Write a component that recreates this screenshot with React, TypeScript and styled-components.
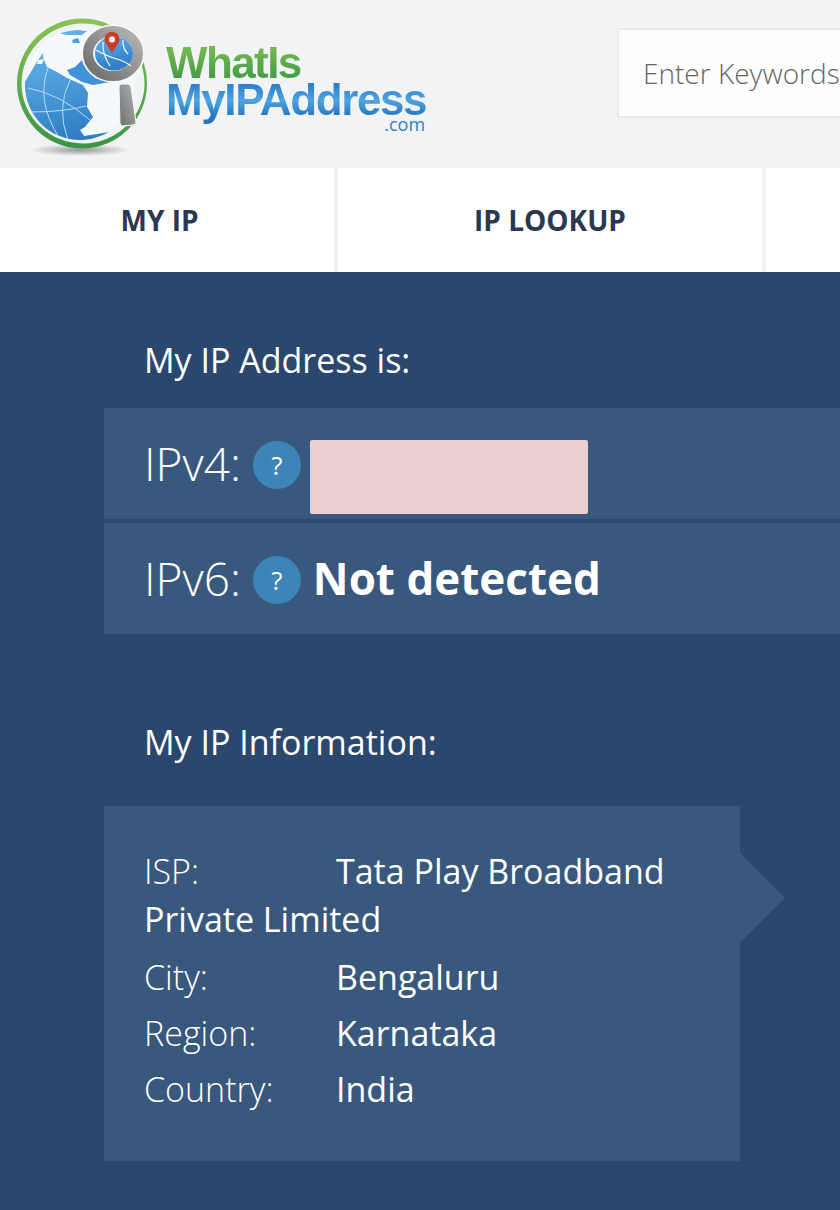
import React from "react";
import styled, { createGlobalStyle } from "styled-components";

const GlobalStyle = createGlobalStyle`
  html, body {
    margin: 0;
    padding: 0;
    width: 840px;
    height: 1210px;
    overflow: hidden;
    background: #2c476e;
    font-family: "Open Sans", "Liberation Sans", sans-serif;
  }
  * { box-sizing: border-box; }
`;

const Page = styled.div`
  width: 840px;
  height: 1210px;
  overflow: hidden;
`;

const Header = styled.header`
  height: 168px;
  background: #f2f3f5;
  display: flex;
  align-items: flex-start;
  overflow: hidden;
`;

const Logo = styled.a`
  display: flex;
  flex: 0 0 617px;
  padding: 10px 0 0 10px;
`;

const Wordmark = styled.div`
  display: flex;
  flex-direction: column;
  margin: 34px 0 0 6px;
  font-family: "Liberation Sans", sans-serif;
  font-weight: 700;
`;

const WordTop = styled.span`
  font-size: 44px;
  line-height: 37px;
  letter-spacing: -1.6px;
  background: linear-gradient(#7dbb52, #3f9a45);
  -webkit-background-clip: text;
  background-clip: text;
  color: transparent;
`;

const WordBottom = styled.span`
  font-size: 44px;
  line-height: 38px;
  padding-bottom: 8px;
  margin-bottom: -8px;
  letter-spacing: -1.4px;
  background: linear-gradient(#2f7fc9 8%, #4ea3e0 42%, #2574bd 78%);
  -webkit-background-clip: text;
  background-clip: text;
  color: transparent;
`;

const WordSuffix = styled.span`
  align-self: flex-end;
  margin: -5px 1px 0 0;
  font-family: "Open Sans", sans-serif;
  font-size: 18px;
  line-height: 20px;
  font-weight: 400;
  color: #2f7fc4;
`;

const Search = styled.input`
  margin-top: 28px;
  flex: 0 0 400px;
  height: 90px;
  border: 2px solid #e9eaec;
  background: #fdfdfd;
  padding: 0 0 0 24px;
  outline: none;
  font-family: "Open Sans", sans-serif;
  font-size: 28px;
  font-weight: 300;
  &::placeholder {
    color: #666;
    opacity: 1;
  }
`;

const Nav = styled.nav`
  height: 104px;
  display: flex;
  gap: 4px;
  background: #f2f3f5;
`;

const NavItem = styled.a<{ $width: number; $inset?: number }>`
  flex: 0 0 ${(p) => p.$width}px;
  padding-right: ${(p) => p.$inset ?? 0}px;
  background: #fff;
  display: flex;
  align-items: center;
  justify-content: center;
  font-size: 28px;
  font-weight: 700;
  color: #2a3850;
`;

const Main = styled.main`
  background: #2c476e;
  padding-left: 104px;
  height: 938px;
`;

const Heading = styled.h2<{ $top: number; $bottom: number }>`
  margin: ${(p) => p.$top}px 0 ${(p) => p.$bottom}px;
  padding-left: 40px;
  font-size: 34px;
  line-height: 48px;
  font-weight: 400;
  color: #fff;
`;

const IpRow = styled.div`
  height: 111px;
  background: #39587d;
  display: flex;
  align-items: flex-start;
  padding: 30px 0 0 40px;
  margin-bottom: 4px;
  color: #fff;
`;

const IpLabel = styled.span`
  font-size: 46px;
  line-height: 50px;
  font-weight: 300;
`;

const HelpBadge = styled.span`
  flex: 0 0 48px;
  width: 48px;
  height: 48px;
  margin: 3px 0 0 12px;
  border-radius: 50%;
  background: #3d85b9;
  display: flex;
  align-items: center;
  justify-content: center;
  font-size: 26px;
  line-height: 1;
  font-weight: 400;
`;

const Redacted = styled.span`
  width: 278px;
  height: 74px;
  margin: 2px 0 0 9px;
  border-radius: 2px;
  background: #eccfd1;
`;

const IpValue = styled.strong`
  margin-left: 12px;
  font-size: 44px;
  line-height: 50px;
  font-weight: 700;
`;

const InfoCard = styled.section`
  position: relative;
  width: 636px;
  height: 355px;
  background: #39587d;
  padding: 41px 40px 0;
  color: #fff;
  font-size: 34px;
  line-height: 48px;

  &::after {
    content: "";
    position: absolute;
    top: 47px;
    left: 100%;
    border-left: 45px solid #39587d;
    border-top: 45px solid transparent;
    border-bottom: 45px solid transparent;
  }
`;

const InfoRow = styled.div`
  margin-bottom: 8px;
  &:first-child {
    margin-bottom: 10px;
  }
`;

const InfoLabel = styled.span`
  display: inline-block;
  width: 192px;
  font-weight: 300;
`;

const rows = [
  ["ISP:", "Tata Play Broadband Private Limited"],
  ["City:", "Bengaluru"],
  ["Region:", "Karnataka"],
  ["Country:", "India"],
];

function LogoMark() {
  return (
    <svg width="150" height="150" viewBox="10 10 150 150">
      <defs>
        <linearGradient id="sea" x1="0" y1="0" x2="0.3" y2="1">
          <stop offset="0" stopColor="#62b0e8" />
          <stop offset="1" stopColor="#2f7ec6" />
        </linearGradient>
        <linearGradient id="ring" x1="0" y1="0" x2="0" y2="1">
          <stop offset="0" stopColor="#8cc355" />
          <stop offset="1" stopColor="#399546" />
        </linearGradient>
        <linearGradient id="metal" x1="1" y1="0" x2="0" y2="1">
          <stop offset="0" stopColor="#b5b5b5" />
          <stop offset="1" stopColor="#6c6c6c" />
        </linearGradient>
        <radialGradient id="shadow">
          <stop offset="0" stopColor="#000" stopOpacity="0.38" />
          <stop offset="1" stopColor="#000" stopOpacity="0" />
        </radialGradient>
        <clipPath id="disc">
          <circle cx="80" cy="85" r="55" />
        </clipPath>
      </defs>
      <ellipse cx="80" cy="150" rx="50" ry="6" fill="url(#shadow)" />
      <path
        fillRule="evenodd"
        d="M17 83.500a65 65 0 1 0 130 0a65 65 0 1 0 -130 0Z M21.500 84a61.500 60 0 1 0 123 -1a61.500 60 0 1 0 -123 1Z"
        fill="url(#ring)"
      />
      <circle cx="80" cy="85" r="55" fill="#f6f9fb" />
      <g clipPath="url(#disc)">
        <path
          d="M43 53 L38 60 L29 75 L20 90 L24 130 L78 146 L112 140 L110 132 L84 136 L80 130 L85 127 L93 117 L87 107 L88 93 L83 85 L67 78 L57 72 L47 67 L43 57Z"
          fill="url(#sea)"
        />
        <path d="M67 70 L75 67 L82 60 L88 70 L95 78 L110 82 L93 85 L82 82 L70 75Z" fill="#3f93d8" />
        <path d="M58 33 L70 29 L87 31 L82 35 L67 35Z" fill="#62b0e8" />
        <path d="M72 40 L78 38 L80 43 L73 43Z" fill="#4a9fe0" />
        <path d="M38 60 L44 59 L42 64 L37 64Z" fill="#f6f9fb" />
        <path
          d="M28 88 Q60 94 90 120 M48 68 Q36 100 58 136 M70 80 Q56 108 68 140 M30 112 Q64 112 86 106"
          fill="none"
          stroke="#b6dbf3"
          strokeWidth="1"
        />
      </g>
      <ellipse cx="113" cy="53.500" rx="32" ry="29" fill="#f6f9fb" />
      <ellipse cx="113" cy="53.500" rx="25" ry="22.500" fill="#eaf3fa" stroke="url(#metal)" strokeWidth="10" />
      <ellipse cx="114" cy="53.500" rx="19" ry="17" fill="url(#sea)" />
      <path
        d="M96 50 Q106 56 120 60 Q126 62 131 66 M123 40 Q122 48 128 54 M103 42 Q102 54 110 66"
        fill="none"
        stroke="#f4f8fb"
        strokeWidth="1.200"
      />
      <path d="M112 53 L105.500 43 A7.500 7.500 0 1 1 118.500 43Z" fill="#c8402c" />
      <circle cx="112" cy="39.500" r="3" fill="#fff" />
      <path
        d="M119 87 Q119 84 122 84 L128 84 Q130 84 131 87 L136 122 Q136 125 133 125 L123 126 Q120 126 120 123Z"
        fill="url(#metal)"
        stroke="#f6f9fb"
        strokeWidth="1"
      />
    </svg>
  );
}

export default function App() {
  return (
    <Page>
      <GlobalStyle />
      <Header>
        <Logo>
          <LogoMark />
          <Wordmark>
            <WordTop>WhatIs</WordTop>
            <WordBottom>MyIPAddress</WordBottom>
            <WordSuffix>.com</WordSuffix>
          </Wordmark>
        </Logo>
        <Search placeholder="Enter Keywords" />
      </Header>
      <Nav>
        <NavItem $width={334} $inset={15}>MY IP</NavItem>
        <NavItem $width={424}>IP LOOKUP</NavItem>
        <NavItem $width={300} />
      </Nav>
      <Main>
        <Heading $top={64} $bottom={24}>My IP Address is:</Heading>
        <IpRow>
          <IpLabel>IPv4:</IpLabel>
          <HelpBadge>?</HelpBadge>
          <Redacted />
        </IpRow>
        <IpRow>
          <IpLabel>IPv6:</IpLabel>
          <HelpBadge>?</HelpBadge>
          <IpValue>Not detected</IpValue>
        </IpRow>
        <Heading $top={84} $bottom={40}>My IP Information:</Heading>
        <InfoCard>
          {rows.map(([label, value]) => (
            <InfoRow key={label}>
              <InfoLabel>{label}</InfoLabel>
              {value}
            </InfoRow>
          ))}
        </InfoCard>
      </Main>
    </Page>
  );
}
